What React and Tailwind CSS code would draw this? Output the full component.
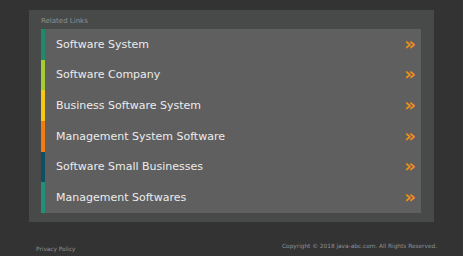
const links = [
  { label: "Software System", bar: "border-[#1d8a6c]" },
  { label: "Software Company", bar: "border-[#a6cc34]" },
  { label: "Business Software System", bar: "border-[#f5c814]" },
  { label: "Management System Software", bar: "border-[#f47a12]" },
  { label: "Software Small Businesses", bar: "border-[#0f4f62]" },
  { label: "Management Softwares", bar: "border-[#20907a]" },
];

export default function App() {
  return (
    <div className="w-[463px] h-[256px] bg-[#333333] font-['DejaVu_Sans',sans-serif] flex flex-col">
      {/* Related links panel */}
      <div className="ml-[29px] mt-[10px] w-[405px] h-[212px] bg-[#484a49] pl-[12px] pr-[13px] flex flex-col">
        <div className="h-[19px] pt-[6px] text-[7px] leading-[10px] text-[#8f8f8f]">Related Links</div>
        <ul className="bg-[#5f5f5f] flex flex-col">
          {links.map((l) => (
            <li
              key={l.label}
              className={`h-[30.67px] border-l-4 ${l.bar} pl-[11px] pr-[5px] flex items-center justify-between`}
            >
              <span className="text-[11px] mt-[1px] text-[#ececec]">{l.label}</span>
              <span className="text-[18px] font-bold text-[#f0901a] leading-none -mt-[1px]">»</span>
            </li>
          ))}
        </ul>
      </div>

      {/* Footer */}
      <div className="flex justify-between items-start pl-[36px] pr-[26px] pt-[20px] text-[5.8px] text-[#929292]">
        <span className="mt-[3px]">Privacy Policy</span>
        <span>Copyright © 2018 java-abc.com. All Rights Reserved.</span>
      </div>
    </div>
  );
}
